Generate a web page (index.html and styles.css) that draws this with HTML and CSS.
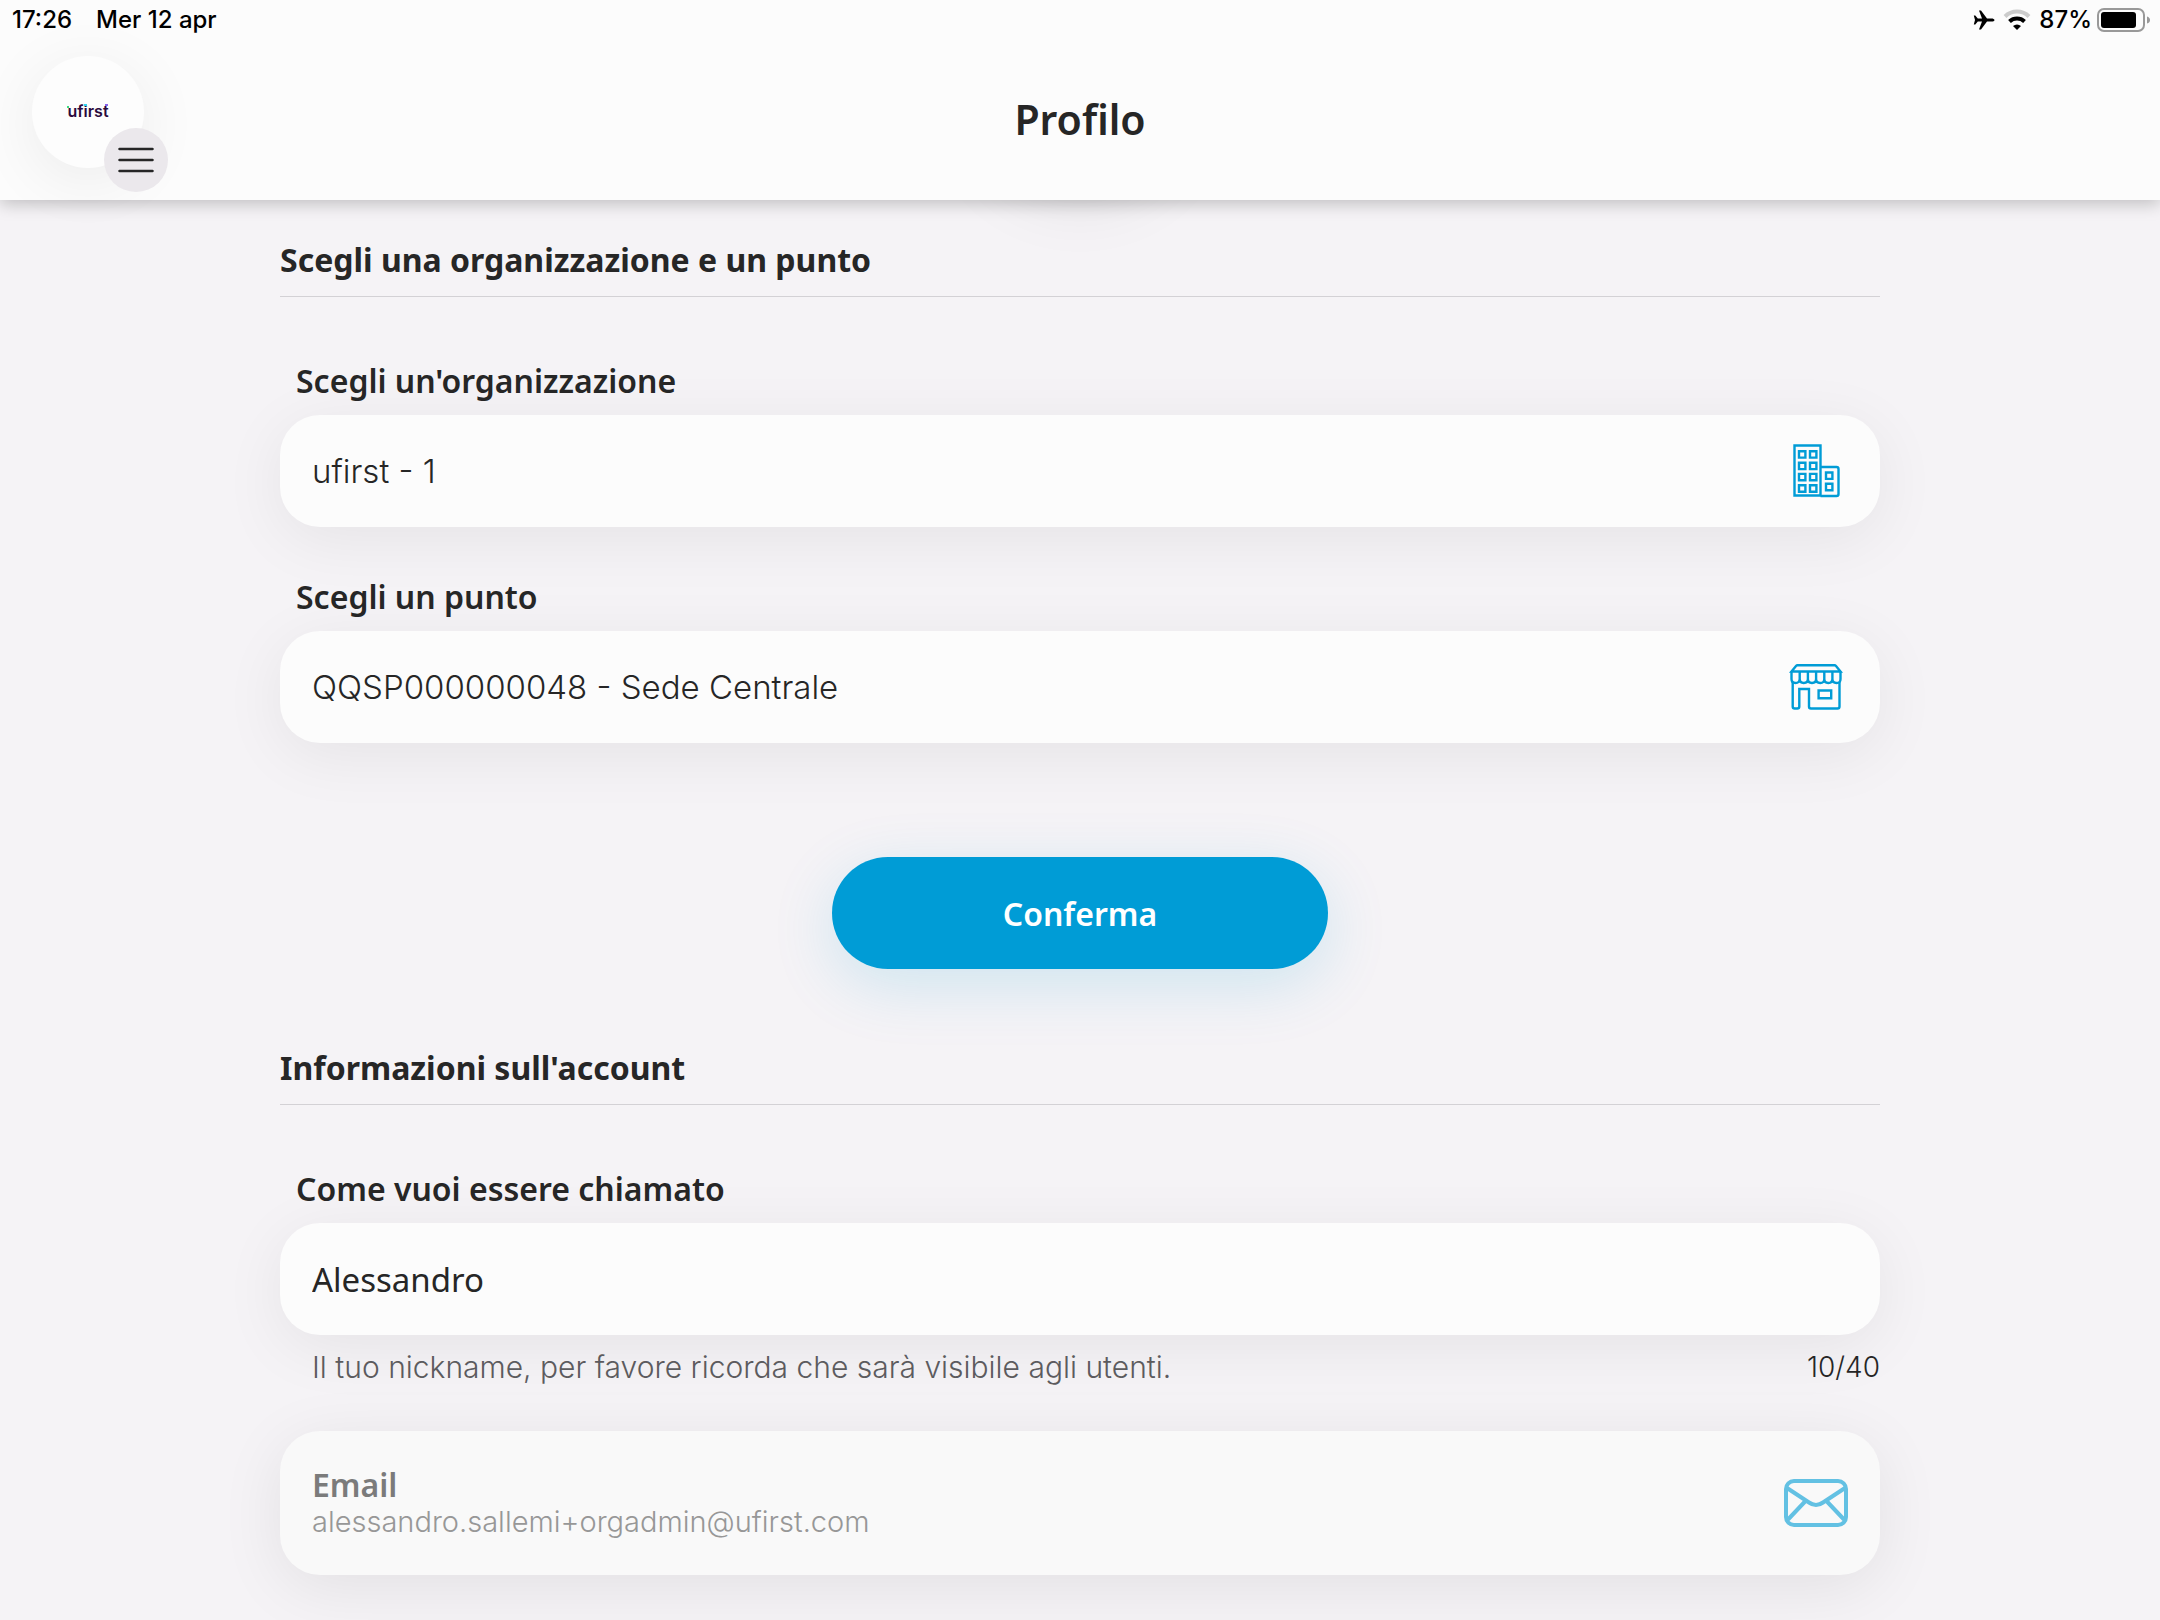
FILE: index.html
```html
<!DOCTYPE html>
<html lang="it">
<head>
<meta charset="utf-8">
<meta name="viewport" content="width=device-width, initial-scale=1">
<title>Profilo</title>
<link rel="stylesheet" href="styles.css">
</head>
<body>
<header class="header">
  <div class="status">
    <div class="status-group status-left"><span>17:26</span><span>Mer 12 apr</span></div>
    <div class="status-group">
      <svg class="plane" viewBox="0 0 22 22" aria-hidden="true"><path d="M21.500 11c0 1-1.500 1.600-3 1.600h-4.500L8 20.500H6l3-7.900H4.800L2.300 15.500H.8L2 11 .8 6.500h1.500l2.500 2.900H9L6 1.500h2l6 7.900h4.500c1.500 0 3 .6 3 1.600z"/></svg>
      <svg class="wifi" viewBox="0 0 28 22" aria-hidden="true"><path d="M2 7.500a17 17 0 0 1 24 0" fill="none" stroke="#ccc" stroke-width="4"/><path d="M6.500 12.500a11 11 0 0 1 15 0" fill="none" stroke="#000" stroke-width="4"/><path d="M10 17a6 6 0 0 1 8 0l-4 4z"/></svg>
      <span class="charge">87%</span>
      <svg class="battery" viewBox="0 0 54 24" aria-hidden="true"><rect x="1" y="1" width="46" height="22" rx="6" fill="none" stroke="#999" stroke-width="2"/><rect x="4" y="4" width="35" height="16" rx="3"/><path d="M50 8.500q3 1 3 3.500t-3 3.500z" fill="#999"/></svg>
    </div>
  </div>
  <div class="bar">
    <div class="brand">
      <svg class="logo" viewBox="0 0 48 20" role="img" aria-label="ufirst"><text x="24" y="15" text-anchor="middle">ufirst</text><path d="M3 4h2v2H3z" fill="#3ddc84"/><path d="M20 2h3v2h-3z" fill="#31d3ee"/><path d="M41 2h3v2h-3z" fill="#8a63e8"/></svg>
      <button class="menu" type="button" aria-label="Menu"><svg viewBox="0 0 36 28" aria-hidden="true"><path d="M1.500 3h33M1.500 14h33M1.500 25h33"/></svg></button>
    </div>
    <h1 class="title">Profilo</h1>
  </div>
</header>
<main class="page">
  <div class="photo"></div>
  <form class="form">
    <section class="section">
      <h2 class="heading">Scegli una organizzazione e un punto</h2>
      <div class="field">
        <label class="label" for="org">Scegli un'organizzazione</label>
        <div class="box">
          <select class="control" id="org"><option>ufirst - 1</option></select>
          <svg class="icon" viewBox="-8 -1 64 56" aria-hidden="true"><g class="thin"><path d="M2.500 1.500h26v50h-26zM28.500 23h16q2 0 2 2v25q0 2-2 2h-16"/><path d="M7 7.200h6.400v6.400H7zM18 7.200h6.400v6.400H18zM7 18.700h6.400v6.400H7zM18 18.700h6.400v6.400H18zM7 29.900h6.400v6.400H7zM18 29.900h6.400v6.400H18zM7 41.300h6.400v6.400H7zM18 41.300h6.400v6.400H18zM34 28.500h6.400v6.400H34zM34 39.800h6.400v6.400H34z"/></g></svg>
        </div>
      </div>
      <div class="field">
        <label class="label" for="point">Scegli un punto</label>
        <div class="box">
          <select class="control" id="point"><option>QQSP000000048 - Sede Centrale</option></select>
          <svg class="icon" viewBox="-6 -5 64 56" aria-hidden="true"><g class="thin"><path d="M1.500 7.500 6 2q.6-.7 1.500-.7h37q.9 0 1.500.7l4.500 5.500zM1.500 7.500V15q0 4 4 4t4.200-4V7.500M9.700 15q0 4 4.100 4t4.100-4V7.500M17.900 15q0 4 4.100 4t4.100-4V7.500M26.100 15q0 4 4.100 4t4.100-4V7.500M34.300 15q0 4 4 4t4.100-4V7.500M42.400 15q0 4 4.100 4t4-4V7.500"/><path d="M2.700 18v24.500q0 2 2 2h2.600q2 0 2-2V25h9.700v17.500q0 2 2 2h26.500q2 0 2-2V18"/><path d="M28.600 26.500h12.600v7.800H28.600z"/></g></svg>
        </div>
      </div>
      <button class="confirm" type="button">Conferma</button>
    </section>
    <section class="section">
      <h2 class="heading">Informazioni sull'account</h2>
      <div class="field">
        <label class="label" for="nick">Come vuoi essere chiamato</label>
        <div class="box">
          <input class="control regular" id="nick" type="text" value="Alessandro" maxlength="40">
        </div>
        <div class="hint"><span class="hint-text">Il tuo nickname, per favore ricorda che sarà visibile agli utenti.</span><span>10/40</span></div>
      </div>
      <div class="box email">
        <div class="stack">
          <label class="email-label" for="email">Email</label>
          <input class="email-value" id="email" type="email" value="alessandro.sallemi+orgadmin@ufirst.com" disabled>
        </div>
        <svg class="icon faded" viewBox="0 -4 64 56" aria-hidden="true"><g class="thick"><rect x="2" y="2" width="60" height="44" rx="8"/><path d="m3 9 22 14.500q7 5 14 0L61 9M22 21.500 4 40.500M42 21.500l18 19"/></g></svg>
      </div>
    </section>
  </form>
</main>
</body>
</html>
```
FILE: styles.css
```css
* { box-sizing: border-box; }

body {
  margin: 0;
  min-height: 100vh;
  background: #f5f3f6;
  color: #262626;
  font-family: "Noto Sans", sans-serif;
  font-size: 32px;
}

button, input, select { font: inherit; color: inherit; }

.header {
  position: sticky;
  top: 0;
  z-index: 2;
  background: #fcfcfc;
  box-shadow: 0 4px 16px rgba(0, 0, 0, .22);
}

.status {
  display: flex;
  justify-content: space-between;
  height: 40px;
  padding: 0 9px 0 12px;
  color: #000;
  font: 500 24px/40px Inter, sans-serif;
}
.status-group { display: flex; align-items: center; }
.status-left { gap: 24px; }
.plane { width: 22px; height: 22px; margin-right: 8px; }
.wifi { width: 28px; height: 22px; margin-right: 8px; }
.charge { margin-right: 5px; }
.battery { width: 54px; height: 24px; }

.bar {
  display: grid;
  grid-template-columns: 1fr auto 1fr;
  align-items: center;
  height: 160px;
  padding: 0 32px;
}
.brand {
  position: relative;
  display: flex;
  align-items: center;
  justify-content: center;
  align-self: start;
  width: 112px;
  height: 112px;
  margin-top: 16px;
  border-radius: 50%;
  background: #fdfdfd;
  box-shadow: 0 12px 64px rgba(0, 0, 0, .07);
}
.logo { width: 48px; height: 20px; }
.logo text { font: 600 16px Inter, sans-serif; fill: #2b0a3d; }
.menu {
  position: absolute;
  right: -24px;
  bottom: -24px;
  display: flex;
  align-items: center;
  justify-content: center;
  width: 64px;
  height: 64px;
  padding: 0;
  border: 0;
  border-radius: 50%;
  background: #ebe8ec;
}
.menu svg {
  width: 36px;
  height: 28px;
  fill: none;
  stroke: #262626;
  stroke-width: 2.5;
  stroke-linecap: round;
}
.title { margin: 0; padding-bottom: 2px; font-size: 41px; font-weight: 600; }

.page { position: relative; padding: 32px 12% 40px; }
.photo {
  position: absolute;
  top: -232px;
  left: calc(50% - 112px);
  width: 224px;
  height: 224px;
  border-radius: 50%;
  box-shadow: 0 12px 64px rgba(0, 0, 0, .08);
}
.form { max-width: 1600px; margin: 0 auto; }

.section { display: flex; flex-direction: column; }
.heading {
  margin: 0 0 58px;
  padding-bottom: 8px;
  border-bottom: 1px solid #d3d1d5;
  font-size: 32px;
  font-weight: 700;
  line-height: 56px;
}
.label {
  display: block;
  padding: 2px 16px 10px;
  font-weight: 600;
  line-height: 48px;
}
.field { margin-bottom: 44px; }
.box {
  display: flex;
  align-items: center;
  min-height: 112px;
  padding: 0 32px;
  border-radius: 40px;
  background: #fcfcfc;
  box-shadow: 0 12px 64px rgba(0, 0, 0, .065);
}
.control {
  flex: 1;
  min-width: 0;
  height: 112px;
  padding: 0;
  border: 0;
  outline: 0;
  appearance: none;
  background: none;
  font-family: Inter, sans-serif;
  font-size: 33px;
  font-weight: 300;
}
.regular { font-family: inherit; font-weight: 400; }
.icon { width: 64px; height: 56px; fill: none; stroke: #009cd6; }
.thin { stroke-width: 2.4; }
.thick { stroke-width: 4; }
.faded { opacity: .6; }

.confirm {
  align-self: center;
  width: 31%;
  height: 112px;
  margin: 70px 0 71px;
  border: 0;
  border-radius: 56px;
  background: #009cd6;
  color: #fff;
  font-weight: 600;
  box-shadow: 0 16px 64px rgba(0, 156, 214, .16);
}

.hint {
  display: flex;
  justify-content: space-between;
  padding: 12px 0 0 32px;
  font-family: Inter, sans-serif;
  font-size: 28px;
  font-weight: 300;
  line-height: 40px;
}
.hint-text { color: #5c5b5e; font-size: 30px; }

.email { min-height: 144px; background: #f9f9f9; box-shadow: 0 12px 64px rgba(0, 0, 0, .08); }
.stack { display: flex; flex: 1; flex-direction: column; }
.email-label { color: #7b7b7b; font-weight: 600; line-height: 36px; }
.email-value {
  height: 36px;
  padding: 0;
  border: 0;
  background: none;
  color: #979797;
  font-family: Inter, sans-serif;
  font-size: 29px;
  font-weight: 300;
}
```
